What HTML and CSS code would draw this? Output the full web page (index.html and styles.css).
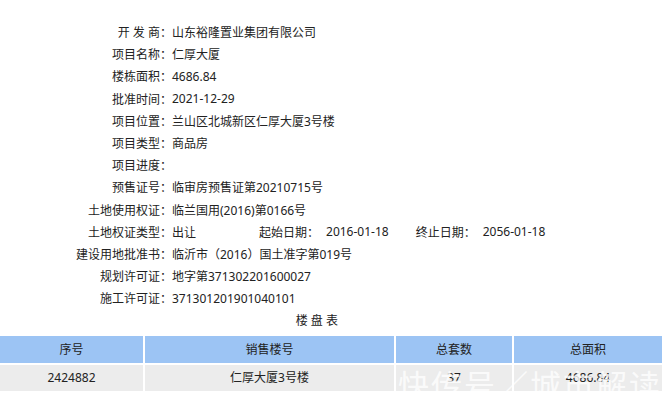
FILE: index.html
```html
<!DOCTYPE html>
<html>
<head>
<meta charset="utf-8">
<title>楼盘信息</title>
<link rel="stylesheet" href="styles.css">
</head>
<body>
<div class="info">
  <div class="label">开 发 商：</div><div class="value">山东裕隆置业集团有限公司</div>
  <div class="label">项目名称：</div><div class="value">仁厚大厦</div>
  <div class="label">楼栋面积：</div><div class="value">4686.84</div>
  <div class="label">批准时间：</div><div class="value">2021-12-29</div>
  <div class="label">项目位置：</div><div class="value">兰山区北城新区仁厚大厦3号楼</div>
  <div class="label">项目类型：</div><div class="value">商品房</div>
  <div class="label">项目进度：</div><div class="value"></div>
  <div class="label">预售证号：</div><div class="value">临审房预售证第20210715号</div>
  <div class="label">土地使用权证：</div><div class="value">临兰国用(2016)第0166号</div>
  <div class="label">土地权证类型：</div>
  <div class="value dates">
    <span class="kind">出让</span>
    <span class="sub">起始日期：</span>
    <span class="date">2016-01-18</span>
    <span class="sub end">终止日期：</span>
    <span class="date">2056-01-18</span>
  </div>
  <div class="label">建设用地批准书：</div><div class="value">临沂市（2016）国土准字第019号</div>
  <div class="label">规划许可证：</div><div class="value">地字第371302201600027</div>
  <div class="label">施工许可证：</div><div class="value">371301201901040101</div>
</div>

<div class="caption">楼 盘 表</div>

<div class="grid">
  <div class="th">序号</div>
  <div class="th">销售楼号</div>
  <div class="th">总套数</div>
  <div class="th">总面积</div>
  <div class="td">2424882</div>
  <div class="td">仁厚大厦3号楼</div>
  <div class="td">37</div>
  <div class="td">4686.84</div>
  <div class="mark">快传号／城市解读</div>
</div>
</body>
</html>
```

FILE: styles.css
```css
body {
  margin: 0;
  font-family: "Noto Sans", "Noto Sans CJK SC", sans-serif;
  font-size: 12px;
  color: #222;
  background: #fff;
}

.info {
  display: grid;
  grid-template-columns: 172px 1fr;
  grid-auto-rows: 22.2px;
  align-items: center;
  padding-top: 21px;
}

.label {
  text-align: right;
  white-space: nowrap;
}

.value {
  white-space: nowrap;
}

.value.dates {
  display: flex;
}

.dates .sub {
  margin-left: 63px;
}

.dates .sub.end {
  margin-left: 27px;
}

.dates .date {
  margin-left: 7px;
}

.caption {
  width: 338px;
  text-align: right;
  height: 22px;
  line-height: 22px;
  margin-top: 1px;
  margin-bottom: 4px;
}

.grid {
  position: relative;
  display: grid;
  grid-template-columns: 143px 249px 116px 1fr;
  grid-template-rows: 27px 26px;
  gap: 2px;
}

.th {
  background-color: #9cc4f4;
  text-align: center;
  line-height: 27px;
}

.td {
  background-color: #ececec;
  text-align: center;
  line-height: 26px;
}

.mark {
  position: absolute;
  left: 398px;
  top: 25px;
  font-family: "Noto Sans CJK SC", sans-serif;
  font-size: 31px;
  letter-spacing: 2px;
  color: rgba(255, 255, 255, 0.8);
  white-space: nowrap;
}
```
